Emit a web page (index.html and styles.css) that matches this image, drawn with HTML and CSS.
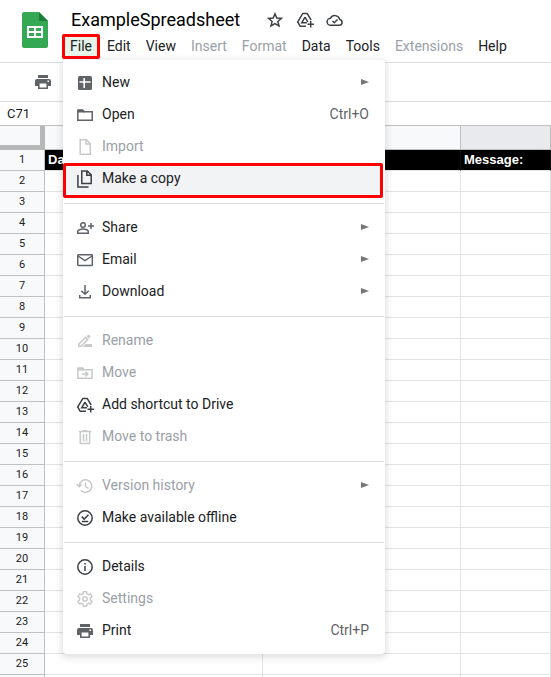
FILE: index.html
```html
<!DOCTYPE html>
<html lang="en">
<head>
<meta charset="utf-8">
<title>ExampleSpreadsheet</title>
<link rel="stylesheet" href="styles.css">
</head>
<body>
<header class="header">
  <svg class="logo" viewBox="0 0 26 36" aria-hidden="true">
    <path fill="#34a853" d="M2 0h15l9 9v25a2 2 0 0 1-2 2H2a2 2 0 0 1-2-2V2a2 2 0 0 1 2-2z"/>
    <path fill="#188038" d="M17 0l9 9h-9z"/>
    <path fill="#fff" fill-rule="evenodd" d="M5 14h16v12H5zM7 16v3h5v-3zM14 16v3h5v-3zM7 21v3h5v-3zM14 21v3h5v-3z"/>
  </svg>
  <div class="heading">
    <div class="title-row">
      <h1 class="title">ExampleSpreadsheet</h1>
      <button class="icon-button" aria-label="Star">
        <svg class="icon" viewBox="0 0 18 18"><path class="line" d="M9 2.8l1.8 4.2 4.6.4-3.5 3 1.1 4.5-4-2.4-4 2.4 1.1-4.5-3.5-3 4.6-.4z"/></svg>
      </button>
      <button class="icon-button" aria-label="Add shortcut to Drive">
        <svg class="icon" viewBox="0 0 18 18"><use href="#drive"/></svg>
      </button>
      <button class="icon-button" aria-label="Document status">
        <svg class="icon" viewBox="0 0 18 18"><path class="line" d="M4.8 14.3a3.5 3.5 0 0 1-.4-7 5 5 0 0 1 9.3 1.1 3 3 0 0 1-.2 5.9z"/><path class="line" d="M6.5 10l1.8 1.8 3.2-3.3"/></svg>
      </button>
    </div>
    <nav class="menubar">
      <div class="menu-anchor">
        <button class="tab tab-open" aria-haspopup="true" aria-expanded="true">File</button>
        <div class="menu" role="menu">
          <button class="item" role="menuitem"><svg class="icon soft" viewBox="0 0 18 18"><rect class="solid" x="2" y="2" width="14" height="14" rx="1.5"/><path stroke="#fff" stroke-width="1.6" d="M8.2 4v10M3.5 8h11"/></svg><span>New</span><svg class="arrow" viewBox="0 0 8 8"><path d="M0 1l8 3-8 3z"/></svg></button>
          <button class="item" role="menuitem"><svg class="icon soft" viewBox="0 0 18 18"><path class="line" d="M1.8 14.2V4.5h5l1.5 1.3h7.9v8.4z"/><path class="solid" d="M2 3.3h4.8l2 2.2v1H1.5V4z"/></svg><span>Open</span><kbd>Ctrl+O</kbd></button>
          <button class="item" role="menuitem" disabled><svg class="icon" viewBox="0 0 18 18"><path class="line" d="M4.2 1.8h6.3l3.8 3.9v10.5H4.2zM10 2v4h4"/></svg><span>Import</span></button>
          <button class="item marked" role="menuitem"><svg class="icon" viewBox="0 0 18 18"><path class="line" d="M5.8.9h5.5l3.9 3.9v8.7H5.8zM10.8 1v4.3h4.3M1.9 5v12h10.6"/></svg><span>Make a copy</span></button>
          <hr>
          <button class="item" role="menuitem"><svg class="icon soft" viewBox="0 0 18 18"><circle class="line" cx="7" cy="6" r="2.3"/><path class="line" d="M1.7 14.2v-1.6c0-1.5 3-2.5 5.3-2.5s5.3 1 5.3 2.5v1.6zM15 4v6M12 7h6"/></svg><span>Share</span><svg class="arrow" viewBox="0 0 8 8"><path d="M0 1l8 3-8 3z"/></svg></button>
          <button class="item" role="menuitem"><svg class="icon soft" viewBox="0 0 18 18"><rect class="line" x="1.8" y="3.8" width="14.5" height="10.6" rx=".6"/><path class="line" d="M2 5l7 4.7L16 5"/></svg><span>Email</span><svg class="arrow" viewBox="0 0 8 8"><path d="M0 1l8 3-8 3z"/></svg></button>
          <button class="item" role="menuitem"><svg class="icon soft" viewBox="0 0 18 18"><path class="line" d="M9 2v9M5.3 7.7L9 11.3l3.7-3.6M3.7 12v2.7h10.6V12"/></svg><span>Download</span><svg class="arrow" viewBox="0 0 8 8"><path d="M0 1l8 3-8 3z"/></svg></button>
          <hr>
          <button class="item" role="menuitem" disabled><svg class="icon" viewBox="0 0 18 18"><path class="line" d="M2.8 14.3v-2.2l6.8-6.8 2.2 2.2L5 14.3z"/><path class="solid" d="M10.7 4.2l1.2-1.2q.6-.5 1.2 0l1 1q.6.6 0 1.2l-1.2 1.2zM9.5 12H16v3H6.5z"/></svg><span>Rename</span></button>
          <button class="item" role="menuitem" disabled><svg class="icon" viewBox="0 0 18 18"><path class="line" d="M1.9 14.2V4.5h5l1.5 1.3h7.7v8.4z"/><path class="solid" d="M2 3.3h4.8l2 2.2v1H1.5V4z"/><path class="line" d="M5.7 10H12M9.5 7.6l2.4 2.4-2.4 2.4"/></svg><span>Move</span></button>
          <button class="item" role="menuitem"><svg class="icon" viewBox="0 0 18 18"><g id="drive"><path class="line" d="M10 15.3H4.2L1.7 11 6.8 2.4h4.4l3.9 6.6"/><path class="line" d="M9 6.2L5.7 11.8h5.2M9 6.2l2.8 4.6M14.7 10v6.4M11.5 13.2h6.4"/></g></svg><span>Add shortcut to Drive</span></button>
          <button class="item" role="menuitem" disabled><svg class="icon" viewBox="0 0 18 18"><path class="line" d="M4.3 4v11.5h9.4V4M2.8 3.5h12.4M6.8 2.7h4.4M7.5 6v7.5M10.5 6v7.5"/></svg><span>Move to trash</span></button>
          <hr>
          <button class="item" role="menuitem" disabled><svg class="icon" viewBox="0 0 18 18"><path class="line" d="M3.2 9A6.3 6.3 0 1 1 5 13.5M.7 7.2l2.5 2.5 2.5-2.5M9.5 5.5V9.6l3 1.8"/></svg><span>Version history</span><svg class="arrow" viewBox="0 0 8 8"><path d="M0 1l8 3-8 3z"/></svg></button>
          <button class="item" role="menuitem"><svg class="icon" viewBox="0 0 18 18"><circle class="line" cx="9" cy="9" r="7.2"/><path class="line" d="M5.7 7.6l2.5 2.5 4.3-4.4M5.8 12.4h6.4"/></svg><span>Make available offline</span></button>
          <hr>
          <button class="item" role="menuitem"><svg class="icon" viewBox="0 0 18 18"><circle class="line" cx="9" cy="9" r="7.2"/><path class="line" d="M9 8v5M9 5v1.6"/></svg><span>Details</span></button>
          <button class="item" role="menuitem" disabled><svg class="icon" viewBox="0 0 18 18"><path class="line" d="M7.5 1.8h3l.4 2 1.6.9 2-.7 1.5 2.6-1.6 1.4v2l1.6 1.4-1.5 2.6-2-.7-1.6.9-.4 2h-3l-.4-2-1.6-.9-2 .7L2 11.4 3.600 10V8L2 6.600 3.500 4l2 .7 1.600-.9z"/><circle class="line" cx="9" cy="9" r="2.200"/></svg><span>Settings</span></button>
          <button class="item" role="menuitem"><svg class="icon soft" viewBox="0 0 18 18"><g id="printer"><path class="solid" fill-rule="evenodd" d="M4 2h10v3H4zM3 6h12a2 2 0 0 1 2 2v5h-3v3H4v-3H1V8a2 2 0 0 1 2-2zM5.600 10.500v4h6.800v-4zM13.500 7.500v1.500H15V7.500z"/></g></svg><span>Print</span><kbd>Ctrl+P</kbd></button>
        </div>
      </div>
      <button class="tab">Edit</button>
      <button class="tab">View</button>
      <button class="tab" disabled>Insert</button>
      <button class="tab" disabled>Format</button>
      <button class="tab">Data</button>
      <button class="tab">Tools</button>
      <button class="tab" disabled>Extensions</button>
      <button class="tab">Help</button>
    </nav>
  </div>
</header>
<div class="toolbar">
  <button class="icon-button" aria-label="Print"><svg class="icon soft" viewBox="0 0 18 18"><use href="#printer"/></svg></button>
</div>
<div class="formula-bar"><input class="name-box" aria-label="Name box" value="C71"></div>
<table class="sheet">
  <colgroup><col class="col-number"><col class="col-date"><col class="col-middle"><col></colgroup>
  <thead><tr><th class="corner"></th><th></th><th></th><th class="selected"></th></tr></thead>
  <tbody>
    <tr class="titles"><th>1</th><td>Date:</td><td></td><td>Message:</td></tr>
    <tr><th>2</th><td></td><td></td><td></td></tr>
    <tr><th>3</th><td></td><td></td><td></td></tr>
    <tr><th>4</th><td></td><td></td><td></td></tr>
    <tr><th>5</th><td></td><td></td><td></td></tr>
    <tr><th>6</th><td></td><td></td><td></td></tr>
    <tr><th>7</th><td></td><td></td><td></td></tr>
    <tr><th>8</th><td></td><td></td><td></td></tr>
    <tr><th>9</th><td></td><td></td><td></td></tr>
    <tr><th>10</th><td></td><td></td><td></td></tr>
    <tr><th>11</th><td></td><td></td><td></td></tr>
    <tr><th>12</th><td></td><td></td><td></td></tr>
    <tr><th>13</th><td></td><td></td><td></td></tr>
    <tr><th>14</th><td></td><td></td><td></td></tr>
    <tr><th>15</th><td></td><td></td><td></td></tr>
    <tr><th>16</th><td></td><td></td><td></td></tr>
    <tr><th>17</th><td></td><td></td><td></td></tr>
    <tr><th>18</th><td></td><td></td><td></td></tr>
    <tr><th>19</th><td></td><td></td><td></td></tr>
    <tr><th>20</th><td></td><td></td><td></td></tr>
    <tr><th>21</th><td></td><td></td><td></td></tr>
    <tr><th>22</th><td></td><td></td><td></td></tr>
    <tr><th>23</th><td></td><td></td><td></td></tr>
    <tr><th>24</th><td></td><td></td><td></td></tr>
    <tr><th>25</th><td></td><td></td><td></td></tr>
    <tr><th></th><td></td><td></td><td></td></tr>
  </tbody>
</table>
</body>
</html>
```
FILE: styles.css
```css
* { box-sizing: border-box; }

body {
  margin: 0;
  height: 100vh;
  overflow: hidden;
  background: #fff;
  color: #202124;
  font-family: Roboto, "Liberation Sans", sans-serif;
  font-size: 14px;
}

button, input {
  margin: 0;
  padding: 0;
  border: 0;
  background: none;
  color: inherit;
  font: inherit;
}

.icon {
  display: block;
  flex: none;
  width: 18px;
  height: 18px;
  color: #3c4043;
}
.icon.soft { color: #5f6368; }
.line { fill: none; stroke: currentColor; stroke-width: 1.5; }
.solid { fill: currentColor; }

/* Header */
.header {
  display: flex;
  height: 63px;
  padding: 8px 0 0 22px;
  border-bottom: 1px solid #dadce0;
}
.logo { flex: none; width: 26px; height: 36px; margin-top: 4px; }
.heading { margin-left: 14px; }
.title-row { display: flex; align-items: center; gap: 12px; height: 24px; padding-left: 9px; }
.title { margin: 0 14px 0 0; font-size: 18px; font-weight: 400; line-height: 24px; color: #000; }

.menubar { display: flex; height: 26px; margin-top: 2px; }
.tab { height: 25px; padding: 0 8px 2px 7px; white-space: nowrap; }
.tab:disabled { color: #9aa0a6; }
.tab-open { padding: 0 5px 2px; border: 3px solid #f00; border-radius: 2px; background: #e6f4ea; }

/* Dropdown menu */
.menu-anchor { position: relative; }
.menu {
  position: absolute;
  z-index: 1;
  top: 26px;
  left: 1px;
  width: 322px;
  padding: 6px 0 8px;
  border-radius: 4px;
  background: #fff;
  box-shadow: 0 2px 6px 2px rgba(60, 64, 67, .15);
}
.menu hr { height: 1px; margin: 9px 1px 7px; border: 0; background: #dadce0; }
.item {
  display: flex;
  align-items: center;
  gap: 8px;
  width: 100%;
  height: 32px;
  padding: 0 16px 0 13px;
  text-align: left;
}
.item span { flex: 1; }
.item kbd { font: inherit; color: #5f6368; }
.item .icon { margin-top: 2px; }
.item:disabled { color: #9aa0a6; }
.item:disabled .icon { color: #c8c9ca; }
.arrow { width: 8px; height: 8px; fill: #777; }
.marked { position: relative; z-index: 0; }
.marked::before {
  content: "";
  position: absolute;
  z-index: -1;
  inset: 1px 2px -4px 0;
  border: 3px solid #f00;
  border-radius: 2px;
  background: #f1f3f4;
}

/* Toolbar and name box */
.toolbar { display: flex; align-items: center; height: 39px; padding-left: 34px; border-bottom: 1px solid #dadce0; }
.formula-bar { height: 24px; border-bottom: 1px solid #c0c0c0; }
.name-box { width: 56px; height: 23px; padding-left: 7px; font-size: 13px; }

/* Grid */
.sheet { width: 100%; table-layout: fixed; border-collapse: separate; border-spacing: 0; }
.col-number { width: 45px; }
.col-date { width: 218px; }
.col-middle { width: 198px; }
.sheet th, .sheet td { height: 21px; padding: 0 3px; line-height: 20px; }
.sheet th {
  border-right: 1px solid #c0c0c0;
  border-bottom: 1px solid #c0c0c0;
  background: #f8f9fa;
  font-size: 11px;
  font-weight: 400;
}
.sheet td { border-right: 1px solid #e2e3e3; border-bottom: 1px solid #e2e3e3; }
.sheet thead th { height: 24px; }
.sheet thead .corner { border-right: 5px solid #b7b7b7; border-bottom: 5px solid #b7b7b7; }
.sheet thead .selected { background: #e8eaed; }
.titles td {
  border-right-color: #111;
  background: #000;
  color: #fff;
  font-family: "Liberation Sans", Arial, sans-serif;
  font-size: 13px;
  font-weight: 700;
}
```
